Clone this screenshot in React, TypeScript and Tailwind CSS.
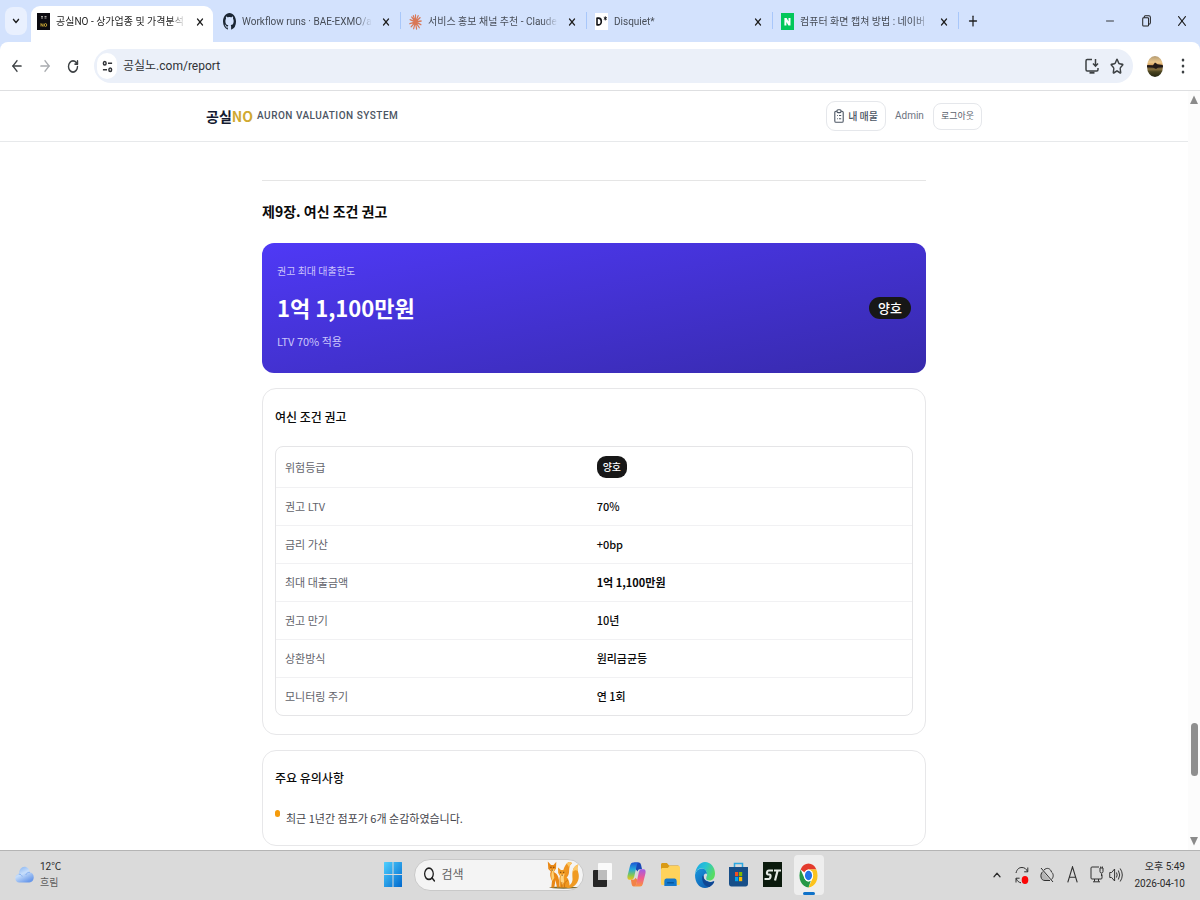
import type { ReactNode, SVGProps } from "react";
import {
  ArrowLeft,
  ArrowRight,
  ChevronDown,
  ChevronUp,
  Minus,
  Plus,
  RotateCw,
  Search,
  Star,
  X,
} from "lucide-react";

type Drawing = SVGProps<SVGSVGElement>;

const uiFont = "font-['Roboto','Noto_Sans_CJK_KR',sans-serif]";
const pageFont = "font-['Noto_Sans_CJK_KR',sans-serif]";

function Svg({ children, ...rest }: Drawing) {
  return (
    <svg preserveAspectRatio="none" fill="none" aria-hidden="true" {...rest}>
      {children}
    </svg>
  );
}

/* ---------- tab favicons ---------- */

function ReportFavicon() {
  return (
    <Svg viewBox="0 0 13 17" className="h-[17px] w-[13px]">
      <path fill="#0c0b10" d="M0 0h13v17H0z" />
      <path d="M4 3.5h2M7.5 3.5h2M4 5h2M7.5 5h2" stroke="#aaa9a2" strokeWidth="1" />
      <path d="M4 13.5v-3l2 3v-3" stroke="#b99a31" strokeWidth="1" />
      <ellipse cx="8.5" cy="12" rx="1.2" ry="1.5" stroke="#b99a31" strokeWidth="1" />
    </Svg>
  );
}

function GithubFavicon() {
  return (
    <Svg viewBox="0 0 16 16" className="h-[17px] w-[13px]">
      <path
        fill="#1b2634"
        d="M8 0C3.58 0 0 3.58 0 8c0 3.54 2.29 6.53 5.47 7.59.4.07.55-.17.55-.38 0-.19-.01-.82-.01-1.49-2.01.37-2.53-.49-2.69-.94-.09-.23-.48-.94-.82-1.13-.28-.15-.68-.52-.01-.53.63-.01 1.08.58 1.23.82.72 1.21 1.87.87 2.33.66.07-.52.28-.87.51-1.07-1.78-.2-3.64-.89-3.64-3.95 0-.87.31-1.59.82-2.15-.08-.2-.36-1.02.08-2.12 0 0 .67-.21 2.2.82.64-.18 1.32-.27 2-.27s1.36.09 2 .27c1.53-1.04 2.2-.82 2.2-.82.44 1.1.16 1.92.08 2.12.51.56.82 1.27.82 2.15 0 3.07-1.87 3.75-3.65 3.95.29.25.54.73.54 1.48 0 1.07-.01 1.93-.01 2.2 0 .21.15.46.55.38A8.01 8.01 0 0 0 16 8c0-4.42-3.58-8-8-8Z"
      />
    </Svg>
  );
}

function ClaudeFavicon() {
  return (
    <Svg viewBox="0 0 24 24" className="h-4 w-[13px]">
      <path
        stroke="#d97757"
        strokeWidth="2.1"
        strokeLinecap="round"
        d="M12 12V1.5M12 12l5-9.5M12 12l8.5-6.5M12 12l10.5-1.5M12 12l10 4M12 12l7 8.5M12 12l2 10.5M12 12l-3.5 10M12 12l-8 7M12 12L1.5 14.5M12 12L2 8.5M12 12L5 4.5M12 12L8 2.5"
      />
    </Svg>
  );
}

function DisquietFavicon() {
  return (
    <Svg viewBox="0 0 13 17" className="h-[17px] w-[13px]">
      <path fill="#fff" d="M0 0h13v17H0z" />
      <path stroke="#15161a" strokeWidth="1.6" d="M2 4.5v8M2 5.1h1.6c3.6 0 3.6 6.800 0 6.800H2" />
      <path stroke="#15161a" strokeWidth="1" d="M10.3 3.4v4M8.8 4.4l3 2M11.8 4.4l-3 2" />
    </Svg>
  );
}

function NaverFavicon() {
  return (
    <Svg viewBox="0 0 13 17" className="h-[17px] w-[13px]">
      <path fill="#03c75a" d="M0 0h13v17H0z" />
      <path fill="#fff" d="M3.4 5H5.600l1.900 3.500V5h2v7.500H7.400L5.4 9v3.5h-2z" />
    </Svg>
  );
}

/* ---------- toolbar drawings ---------- */

function TuneIcon() {
  return (
    <Svg viewBox="0 0 12 14" className="h-[13px] w-[11px]" stroke="#303236" strokeWidth="1.6">
      <ellipse cx="3" cy="3.5" rx="1.5" ry="1.9" />
      <path d="M6.5 3.5h4.5M1 10.5h4.5" />
      <ellipse cx="9" cy="10.5" rx="1.5" ry="1.9" />
    </Svg>
  );
}

function InstallIcon() {
  return (
    <Svg viewBox="0 0 14 16" className="h-4 w-[14px]" stroke="#3c4043" strokeWidth="1.5">
      <path d="M7 1.5H2.2Q1 1.5 1 3v8.500Q1 13 2.200 13h9.600q1.200 0 1.200-1.500V10" />
      <path d="M10.500 1v6.500M8 5.500l2.500 2.700L13 5.500" />
      <path d="M4.500 14.700h5" strokeWidth="2" />
    </Svg>
  );
}

function Avatar() {
  return (
    <Svg viewBox="0 0 16 21" className="h-[21px] w-4">
      <defs>
        <linearGradient id="sunset" x1="0" y1="0" x2="0" y2="1">
          <stop offset="0" stopColor="#b39a72" />
          <stop offset=".3" stopColor="#ecc98d" />
          <stop offset=".45" stopColor="#d09a58" />
          <stop offset=".5" stopColor="#2d241c" />
          <stop offset=".62" stopColor="#8c7440" />
          <stop offset=".75" stopColor="#4a4420" />
          <stop offset="1" stopColor="#23240f" />
        </linearGradient>
        <clipPath id="round-avatar">
          <ellipse cx="8" cy="10.5" rx="8" ry="10.5" />
        </clipPath>
      </defs>
      <g clipPath="url(#round-avatar)">
        <path fill="url(#sunset)" d="M0 0h16v21H0z" />
        <path fill="#221a18" d="M0 9l6 .3 2-2.800 2.500 1.800 5.500.7v2l-5 .5-2 1.500-3-1.500-6-.5z" />
      </g>
    </Svg>
  );
}

function ClipboardIcon() {
  return (
    <Svg viewBox="0 0 10 14" className="h-[14px] w-[10px]" stroke="#4b5563" strokeWidth="1.1">
      <path d="M3 2.200H2Q.8 2.200.8 3.600v8.300q0 1.400 1.200 1.400h6q1.200 0 1.200-1.400V3.600q0-1.400-1.200-1.400H7" />
      <rect x="3" y=".8" width="4" height="2.8" rx="1" />
      <path d="M3 6.500h.8M5 6.500h2.200M3 9.800h.8M5 9.800h2.200" />
    </Svg>
  );
}

/* ---------- taskbar drawings ---------- */

function CloudIcon() {
  return (
    <Svg viewBox="0 0 20 17" className="h-[17px] w-[19px]">
      <defs>
        <linearGradient id="cloud" x1="0" y1="0" x2=".6" y2="1">
          <stop offset="0" stopColor="#78a9ee" />
          <stop offset=".5" stopColor="#c7defb" />
          <stop offset="1" stopColor="#6b9aea" />
        </linearGradient>
      </defs>
      <path
        fill="url(#cloud)"
        d="M4.500 16.500C2 16.500.3 14.700.3 12.300c0-2.300 1.500-4 3.700-4.200C4.500 3.600 6.700.7 10 .7c3 0 5.200 2.300 5.600 5.600 2.400.2 4.100 2.200 4.100 5 0 3-1.900 5.200-4.500 5.200Z"
      />
      <path stroke="#79a8ee" strokeWidth=".8" d="M4 8.200c2 0 3 .8 3.600 2.400M15.600 6.400c-2.200 0-3.600.8-4.300 2.600" />
    </Svg>
  );
}

function WindowsIcon() {
  return (
    <Svg viewBox="0 0 18 25" className="h-[25px] w-[18px]">
      <defs>
        <linearGradient id="win" x1="0" y1="0" x2="1" y2="1">
          <stop offset="0" stopColor="#4fd0ff" />
          <stop offset="1" stopColor="#0068cd" />
        </linearGradient>
      </defs>
      <path fill="url(#win)" d="M0 .5Q0 0 .5 0h8v12H0zM9.500 0h8q.5 0 .5.500V12H9.500zM0 13h8.500v12h-8Q0 25 0 24.500zM9.500 13H18v11.500q0 .5-.5.500h-8z" />
    </Svg>
  );
}

function FoxesIcon() {
  return (
    <Svg viewBox="0 0 32 28" className="h-7 w-8 shrink-0">
      <path fill="#7a6a35" d="M2 26.300q14-1.500 29 0-1 1.400-14.500 1.400T2 26.300" />
      <path fill="#ee9320" d="M16 18C15 11 17 6 19.500 2.800 21.500.4 24 .6 25 2.500c-3 1.500-2.500 5-3 9-.4 3.500-2.500 6.500-6 6.500Z" />
      <path fill="#fbc765" d="M19.500 2.800C21.500.4 24 .6 25 2.500c-2 1-2.600 2.700-2.800 4.500-.7-2-1.500-3.200-2.700-4.200Z" />
      <path fill="#f09a22" d="M19 26.300c3-1.300 7-4 6.500-9C25 11.500 25.500 5 31.500 3.500c-2 3-.8 5.500 0 9C33 19 29 27 21 27Z" />
      <path fill="#fcc869" d="M25.700 11c.3-4 2-6.800 5.800-7.500-1.500 2.300-1.200 4.200-.7 6.500-1.800-1.200-3.500-.8-5.100 1Z" />
      <path fill="#e98816" d="M.8.600 4 4h2.500L9.300.8 9 7.500 6.800 11c4.500 2 5.700 7 5.700 15.500H10L8.500 19 7.300 26.500h-3L5 20C3.200 16 2.600 13 3.800 10.500L1.300 8Z" />
      <path fill="#ffd071" d="M2.500 7.500 5 9l2.800-1.500L6.500 11l.8 6-2.100 3c-1-4-1.200-7-.2-9.500Z" />
      <path fill="#ef9820" d="M11 6.500 14 9h2.500l3-2.500-.3 6L17.500 15c3.500 1.500 5.500 5 5 11.500H12.500c.8-3.500-1-7 .5-11.500l-1.800-3Z" />
      <path fill="#ffd482" d="M12.500 12.500 15 14l2.700-1.500-1 3.500.3 5-2 3c-1.500-3-1.800-6-1.200-8.500Z" />
      <path stroke="#c96d0c" strokeWidth=".8" d="M17.500 26.500c-.5-4 1-6.500 3.500-7.500M14.800 21v5.300" />
      <path stroke="#3d1f07" strokeWidth="1" d="M3.500 6.300h.9M6.400 6.300h.9M13.300 11.300h.9M16.300 11.300h.9M4.700 9.300h.8M14.700 14.300h.8" />
    </Svg>
  );
}

function TaskViewIcon() {
  return (
    <Svg viewBox="0 0 19 24" className="h-6 w-[19px]">
      <rect x="0" y="7" width="14" height="17" rx="1" fill="#262626" />
      <rect x="5" y="0" width="14" height="17" rx="1" fill="#fafafa" />
      <path fill="#bdbdbd" d="M5 7h9v10H5z" />
    </Svg>
  );
}

function CopilotIcon() {
  return (
    <Svg viewBox="0 0 24 24" className="h-[25px] w-[19px]">
      <defs>
        <linearGradient id="cpa" x1="0" y1="0" x2="0" y2="1">
          <stop offset="0" stopColor="#1c57d5" />
          <stop offset=".4" stopColor="#25a7dc" />
          <stop offset=".75" stopColor="#8ac94d" />
          <stop offset="1" stopColor="#f2c11b" />
        </linearGradient>
        <linearGradient id="cpb" x1="0" y1="0" x2="0" y2="1">
          <stop offset="0" stopColor="#a05be6" />
          <stop offset=".5" stopColor="#ef5a91" />
          <stop offset="1" stopColor="#f9953f" />
        </linearGradient>
      </defs>
      <path fill="#1948b7" d="M9 .5h6q2 0 2.700 2.200L19 7h-3q-2 0-2.700 2L11 7Z" />
      <path fill="url(#cpa)" d="M7.5.5H15q-2 0-2.700 2.500L9 14.500Q8.200 17 6 17H3Q0 17 .6 13.500L4 3Q4.800.5 7.500.5Z" />
      <path fill="#f28245" d="M5 17h3q2 0 2.700-2l2.300 2-1 4q-.8 2.500-3 2.500H8.500q-2 0-2.700-2.500Z" />
      <path fill="url(#cpb)" d="M16.500 23.500H9q2 0 2.700-2.500L15 9.500Q15.800 7 18 7h3q3 0 2.400 3.500L20 21q-.8 2.500-3.500 2.500Z" />
    </Svg>
  );
}

function FolderIcon() {
  return (
    <Svg viewBox="0 0 20 23" className="h-[23px] w-[19px]">
      <path fill="#d99a15" d="M0 1.500Q0 0 1.200 0h5L8.500 2.500H18q1.200 0 1.200 1.500v6H0z" />
      <path fill="#ffd35c" d="M0 6.500Q0 5 1.200 5H7l2-2h9.500Q20 3 20 4.500v16q0 1.500-1.200 1.500H1.200Q0 22 0 20.500z" />
      <path fill="#1478cc" d="M3.500 18q0-2.500 2-2.500h9q2 0 2 2.500v5h-13z" />
      <path fill="#07579f" d="M6.500 19h7v1.500h-7z" />
    </Svg>
  );
}

function EdgeIcon() {
  return (
    <Svg viewBox="0 0 24 24" className="h-[26px] w-5">
      <defs>
        <linearGradient id="edga" x1="0" y1="0" x2="1" y2=".5">
          <stop offset="0" stopColor="#1aa3e8" />
          <stop offset=".5" stopColor="#27c3d5" />
          <stop offset="1" stopColor="#58dc62" />
        </linearGradient>
        <linearGradient id="edgb" x1="0" y1="0" x2="1" y2="1">
          <stop offset="0" stopColor="#1998de" />
          <stop offset="1" stopColor="#0b4fa6" />
        </linearGradient>
      </defs>
      <path fill="url(#edgb)" d="M0 12C1 8 4.500 6 8.500 6c4 0 6 2.500 6 5 0 2-1 2.500-1 4 0 2 2.500 3.500 5.500 3.500 2 0 3.500-1 4-.5.5.5-3.500 6-11 6C5 24 0 19 0 12Z" />
      <path fill="#0f4592" d="M9 12.500c-1.500 5 2 10.500 8 10.500 3-1 6-4 6-5-1-.5-2 .8-5 .8-3.500 0-6.500-2-6.500-5.300Z" />
      <path fill="#dadada" d="M10.500 13.500c0-2 1.200-3 2.600-3 1 0 1.500.6 1.400 1.500-.1 1.200-1 1.600-1 2.700 0 1.400 1.300 2.300 3.500 2.800-3.500.5-6.500-1.500-6.500-4Z" />
      <path fill="url(#edga)" d="M.2 11C1 4.800 6 0 12 0c7 0 12 5 12 10.500 0 4-3 6.500-6.500 6.500-2.500 0-4-.8-4-1.800 0-.7 1-1.200 1-3.700 0-3-3-5.700-6.800-5.700-3.500 0-6 2-7.500 5.200Z" />
    </Svg>
  );
}

function StoreIcon() {
  return (
    <Svg viewBox="0 0 19 25" className="h-[25px] w-[19px]">
      <path stroke="#2ba8e2" strokeWidth="1.5" d="M5.500 6V1.500h8V6" />
      <path fill="#174e88" d="M0 5h19v16.500q0 3-2.500 3h-14q-2.500 0-2.500-3z" />
      <path fill="#f25022" d="M6 10h3.200v4.200H6z" />
      <path fill="#7fba00" d="M10 10h3.200v4.200H10z" />
      <path fill="#00a4ef" d="M6 15h3.200v4.200H6z" />
      <path fill="#ffb900" d="M10 15h3.200v4.200H10z" />
    </Svg>
  );
}

function TradingIcon() {
  return (
    <Svg viewBox="0 0 19 25" className="h-[25px] w-[19px]">
      <path fill="#0b1a0d" d="M0 0h19v25H0z" />
      <path stroke="#e4e9e4" strokeWidth="2.2" d="M10 8.500H5.800q-1.500 0-1.800 2t1.300 2h1q1.500 0 1.200 2.200T5.800 17H1.500M11 8.500H18M14.500 9L12 18.500" />
    </Svg>
  );
}

function ChromeIcon() {
  return (
    <Svg viewBox="0 0 48 48" className="h-[25px] w-[19px]">
      <circle cx="24" cy="24" r="23" fill="#fff" />
      <path fill="#e33b2e" d="M24 1a23 23 0 0 1 19.900 11.500H24A11.500 11.500 0 0 0 14 18.200L4.100 12.500A23 23 0 0 1 24 1Z" />
      <path fill="#fcc31e" d="M43.900 12.500A23 23 0 0 1 24 47l10-17.200a11.500 11.500 0 0 0 0-11.600l-1-1.700-9-4Z" />
      <path fill="#279847" d="M24 47A23 23 0 0 1 4.100 12.500L14 29.800A11.500 11.500 0 0 0 24 35.500l6-1.700Z" />
      <circle cx="24" cy="24" r="11.5" fill="#fff" />
      <circle cx="24" cy="24" r="9" fill="#2373e8" />
    </Svg>
  );
}

function SyncIcon() {
  return (
    <Svg viewBox="0 0 14 18" className="h-[18px] w-[14px]" stroke="#303030" strokeWidth="1">
      <path d="M1 7C2 3 4 1.500 7 1.500c2.500 0 4.500 1.500 5.500 4M12.800 1.500v4.300H9.200M1 16.500v-4.300h3.600M1.200 12.500C2 15 4 16.500 6 16.800" />
      <ellipse cx="10" cy="14" rx="3.3" ry="4" fill="#fb0505" stroke="none" />
    </Svg>
  );
}

function CloudOffIcon() {
  return (
    <Svg viewBox="0 0 14 16" className="h-4 w-[14px]" stroke="#303030" strokeWidth="1">
      <path fill="#b5b5b5" d="M3 4.500C1 6 .7 8 1 10c.4 2.500 2 3.500 4 3.500h5" />
      <path d="M4 3c3-3 6.500-1.500 7.500 2 2 1.500 2.500 5 0 7.500M1 1l12 14" />
    </Svg>
  );
}

function LetterModeIcon() {
  return (
    <Svg viewBox="0 0 10 16" className="h-[17px] w-[11px]" stroke="#303030" strokeWidth="1">
      <path d="M.7 15.500L5 .8l4.300 14.700M2.200 10.500h5.600" />
    </Svg>
  );
}

function NetworkIcon() {
  return (
    <Svg viewBox="0 0 14 17" className="h-[17px] w-[14px]" stroke="#303030" strokeWidth="1">
      <path d="M9 1H2Q1 1 1 2v10q0 1 1 1h9q1 0 1-1V8.500M4.500 13v2.500M8.500 13v2.500M3 15.800h7M11.500 7.500V10" />
      <path d="M10 2h3v3.500q0 1.500-1.500 1.500T10 5.500zM10.700 2V.5M12.400 2V.5" />
    </Svg>
  );
}

function SpeakerIcon() {
  return (
    <Svg viewBox="0 0 15 16" className="h-4 w-[14px]" stroke="#303030" strokeWidth="1">
      <path d="M.8 5.500h2L6 2v12l-3.200-3.500h-2zM8 5.500q1.500 2.500 0 5M10 3.500q3 4.500 0 9M12 1.500q4.500 6.500 0 13" />
    </Svg>
  );
}

/* ---------- browser frame ---------- */

const tabs: { title: string; icon: ReactNode }[] = [
  { title: "공실NO - 상가업종 및 가격분석", icon: <ReportFavicon /> },
  { title: "Workflow runs · BAE-EXMO/au", icon: <GithubFavicon /> },
  { title: "서비스 홍보 채널 추천 - Claude", icon: <ClaudeFavicon /> },
  { title: "Disquiet*", icon: <DisquietFavicon /> },
  { title: "컴퓨터 화면 캡쳐 방법 : 네이버", icon: <NaverFavicon /> },
];

function TabStrip() {
  return (
    <div className="flex h-[42px] shrink-0 items-stretch bg-[#d3e2fd]">
      <div className="flex w-[31px] shrink-0 items-center justify-center">
        <button aria-label="탭 검색" className="flex h-7 w-[22px] items-center justify-center rounded-lg bg-[#e9f0fe]">
          <ChevronDown preserveAspectRatio="none" className="h-3 w-[10px] text-[#1f1f1f]" strokeWidth={3.5} />
        </button>
      </div>
      <div role="tablist" className="flex min-w-0">
        {tabs.map((tab, i) => (
          <div
            key={tab.title}
            className={"flex shrink items-stretch pt-[6px] " + (i === 0 ? "w-[184px]" : "w-[186px]")}
          >
            <div
              role="tab"
              aria-selected={i === 0}
              className={
                "flex min-w-0 flex-1 items-center gap-[6px] pb-[5px] " +
                (i === 0 ? "mr-[2px] rounded-t-[9px] bg-white pr-[5px] pl-[6px]" : "pr-[6px] pl-2")
              }
            >
              <span className="shrink-0">{tab.icon}</span>
              <span
                className={
                  "min-w-0 flex-1 overflow-hidden [mask-image:linear-gradient(to_right,black_88%,transparent)] text-[10px] leading-4 whitespace-nowrap " +
                  (i === 0 ? "text-[#1f1f1f]" : "text-[#474d57]")
                }
              >
                {tab.title}
              </span>
              <button aria-label="탭 닫기" className="flex h-4 w-4 shrink-0 items-center justify-center">
                <X preserveAspectRatio="none" className="h-3 w-[10px] text-[#1f1f1f]" strokeWidth={3} />
              </button>
            </div>
            {i > 0 && <span className="mt-[6px] h-[17px] w-px bg-[#a8c7fa]" />}
          </div>
        ))}
      </div>
      <button aria-label="새 탭" className="flex w-[27px] shrink-0 items-center justify-center">
        <Plus preserveAspectRatio="none" className="h-4 w-3 text-[#1f1f1f]" strokeWidth={2.5} />
      </button>
      <div className="ml-auto flex shrink-0 items-center text-[#1f1f1f]">
        <button aria-label="최소화" className="flex h-10 w-9 items-center justify-center">
          <Minus preserveAspectRatio="none" className="h-4 w-3" strokeWidth={1.5} />
        </button>
        <button aria-label="이전 크기로" className="flex h-10 w-9 items-center justify-center">
          <Svg viewBox="0 0 10 13" className="h-3 w-[9px]" stroke="currentColor" strokeWidth="1.1">
            <rect x=".8" y="3" width="6.5" height="9" rx="1" />
            <path d="M2.500 2.800V2Q2.500.8 3.700.8h4Q9.300.8 9.300 2.500v6q0 1.500-1.800 1.500" />
          </Svg>
        </button>
        <button aria-label="닫기" className="flex h-10 w-9 items-center justify-center">
          <X preserveAspectRatio="none" className="h-[18px] w-[14px]" strokeWidth={1.5} />
        </button>
      </div>
    </div>
  );
}

function Toolbar() {
  return (
    <div className="bg-[#d3e2fd]">
      <div className="flex h-[49px] items-center rounded-t-lg border-b border-[#dedfe1] bg-white pl-[3px] text-[#3c4043]">
        <button aria-label="뒤로" className="flex h-8 w-7 items-center justify-center">
          <ArrowLeft preserveAspectRatio="none" className="h-[18px] w-[14px]" strokeWidth={2.3} />
        </button>
        <button aria-label="앞으로" className="flex h-8 w-7 items-center justify-center text-[#a8abaf]">
          <ArrowRight preserveAspectRatio="none" className="h-[18px] w-[14px]" strokeWidth={2.3} />
        </button>
        <button aria-label="새로고침" className="flex h-8 w-7 items-center justify-center">
          <RotateCw preserveAspectRatio="none" className="h-[15px] w-3" strokeWidth={2.8} />
        </button>
        <div className="ml-[7px] flex h-[34px] flex-1 items-center rounded-full bg-[#ebf0f9] pr-1 pl-[3px]">
          <button aria-label="사이트 정보" className="flex h-[26px] w-5 items-center justify-center rounded-full bg-white">
            <TuneIcon />
          </button>
          <input
            aria-label="주소창"
            defaultValue="공실노.com/report"
            className="ml-[6px] min-w-0 flex-1 bg-transparent text-[12px] leading-5 text-[#303236] outline-none"
          />
          <button aria-label="앱 설치" className="flex w-[25px] justify-center">
            <InstallIcon />
          </button>
          <button aria-label="북마크" className="flex w-[25px] justify-center">
            <Star preserveAspectRatio="none" className="h-[17px] w-[14px]" strokeWidth={2.4} />
          </button>
        </div>
        <button aria-label="프로필" className="ml-2 flex w-7 justify-center">
          <Avatar />
        </button>
        <button aria-label="메뉴" className="flex w-7 justify-center">
          <Svg viewBox="0 0 4 16" className="h-4 w-1" fill="#3c4043">
            <ellipse cx="2" cy="2" rx="1.3" ry="1.6" />
            <ellipse cx="2" cy="8" rx="1.3" ry="1.6" />
            <ellipse cx="2" cy="14" rx="1.3" ry="1.6" />
          </Svg>
        </button>
        <span className="w-[3px]" />
      </div>
    </div>
  );
}

/* ---------- report page ---------- */

function SiteHeader() {
  return (
    <header className="h-[51px] border-b border-[#e7e9eb] bg-white">
      <div className="mx-auto flex h-full max-w-[776px] items-center">
        <a href="#home" className="flex items-center gap-1">
          <span className="text-[14px] leading-5 font-bold text-[#141a30]">
            공실<span className="text-[#d0a931]">NO</span>
          </span>
          <span className={uiFont + " text-[10px] leading-4 font-medium tracking-wider text-[#4b5563]"}>
            AURON VALUATION SYSTEM
          </span>
        </a>
        <nav className="ml-auto flex items-center text-[#5b626d]">
          <a
            href="#listings"
            className="flex h-[30px] items-center gap-1 rounded-[9px] border border-[#e5e7eb] px-[7px] text-[10px] leading-4 font-medium text-[#4b5563]"
          >
            <ClipboardIcon />내 매물
          </a>
          <span className={uiFont + " mx-[9px] text-[10px] leading-4 text-[#6b7280]"}>Admin</span>
          <button className="h-[27px] rounded-[8px] border border-[#e5e7eb] px-[7px] text-[9px] leading-4">
            로그아웃
          </button>
        </nav>
      </div>
    </header>
  );
}

const terms: { label: string; value: string; kind?: "badge" | "strong" }[] = [
  { label: "위험등급", value: "양호", kind: "badge" },
  { label: "권고 LTV", value: "70%" },
  { label: "금리 가산", value: "+0bp" },
  { label: "최대 대출금액", value: "1억 1,100만원", kind: "strong" },
  { label: "권고 만기", value: "10년" },
  { label: "상환방식", value: "원리금균등" },
  { label: "모니터링 주기", value: "연 1회" },
];

function LoanCard() {
  return (
    <section className="mt-5 flex h-[130px] items-center justify-between rounded-xl bg-linear-to-br from-[#4f39f6] to-[#372aac] px-[15px] text-white">
      <div className="pb-1">
        <p className="text-[10px] leading-4 text-[#cbc5fb]">권고 최대 대출한도</p>
        <p className="mt-3 text-[22px] leading-8 font-bold">1억 1,100만원</p>
        <p className="mt-[10px] text-[11px] leading-4 text-[#cbc5fb]">LTV 70% 적용</p>
      </div>
      <span className="flex h-[22px] items-center rounded-full bg-[#171717] px-[9px] text-[13px] leading-4 font-medium">
        양호
      </span>
    </section>
  );
}

function TermsCard() {
  return (
    <section className="mt-[15px] rounded-[14px] border border-[#e7e7e9] px-3 py-[18px]">
      <h3 className="text-[12px] leading-5 font-medium text-[#0a0a0a]">여신 조건 권고</h3>
      <div className="mt-[19px] overflow-hidden rounded-lg border border-[#e5e5e7]">
        <table className="w-full table-fixed border-collapse text-[11px] leading-4">
          <tbody>
            {terms.map(({ label, value, kind }, i) => (
              <tr key={label} className={i === 0 ? "h-10" : "h-[38px] border-t border-[#f1f1f3]"}>
                <th scope="row" className="w-[49%] px-[9px] text-left font-normal text-[#62636b]">
                  {label}
                </th>
                <td className={"px-[9px] text-[#0a0a0a] " + (kind === "strong" ? "font-bold" : "font-medium")}>
                  {kind === "badge" ? (
                    <span className="inline-flex h-[22px] items-center rounded-[9px] bg-[#171717] px-[6px] text-[10px] text-white">
                      {value}
                    </span>
                  ) : (
                    value
                  )}
                </td>
              </tr>
            ))}
          </tbody>
        </table>
      </div>
    </section>
  );
}

function NotesCard() {
  return (
    <section className="mt-[15px] rounded-[14px] border border-[#e7e7e9] px-3 pt-[17px] pb-[17px]">
      <h3 className="text-[12px] leading-5 font-medium text-[#0a0a0a]">주요 유의사항</h3>
      <ul className="mt-5">
        <li className="flex items-start gap-[6px] text-[11px] leading-5 text-[#46464d]">
          <span className="mt-[2px] h-[7px] w-[5px] shrink-0 rounded-full bg-[#f59b0b]" />
          최근 1년간 점포가 6개 순감하였습니다.
        </li>
      </ul>
    </section>
  );
}

function ScrollTrack() {
  return (
    <div aria-hidden="true" className="flex w-3 shrink-0 flex-col items-center bg-[#fcfcfc] py-1">
      <Svg viewBox="0 0 8 8" className="h-[9px] w-2 shrink-0">
        <path fill="#8a8a8a" d="M4 .5L8 8H0z" />
      </Svg>
      <span className="flex-[621]" />
      <span className="h-[53px] w-[7px] rounded-full bg-[#8f8f8f]" />
      <span className="flex-[61]" />
      <Svg viewBox="0 0 8 8" className="h-[9px] w-2 shrink-0">
        <path fill="#8a8a8a" d="M4 7.500L8 0H0z" />
      </Svg>
    </div>
  );
}

/* ---------- taskbar ---------- */

const apps: { name: string; icon: ReactNode }[] = [
  { name: "작업 보기", icon: <TaskViewIcon /> },
  { name: "Copilot", icon: <CopilotIcon /> },
  { name: "파일 탐색기", icon: <FolderIcon /> },
  { name: "Edge", icon: <EdgeIcon /> },
  { name: "Store", icon: <StoreIcon /> },
  { name: "Trading", icon: <TradingIcon /> },
];

function Taskbar() {
  return (
    <footer className="grid h-[50px] shrink-0 grid-cols-[1fr_auto_1fr] items-center border-t border-[#b4b4b4] bg-[#dadada] pb-[2px] text-[#2b2b2b]">
      <button className="flex items-center gap-[6px] justify-self-start pl-[15px] text-left text-[10px] leading-4">
        <CloudIcon />
        <span>
          <span className="block">12℃</span>
          <span className="block text-[#5d5d5d]">흐림</span>
        </span>
      </button>
      <div className="flex items-center pl-[7px]">
        <button aria-label="시작" className="mr-3">
          <WindowsIcon />
        </button>
        <label className="flex h-8 w-[170px] items-center rounded-full border border-[#c9c9c9] bg-[#f4f4f4] pr-1 pl-2">
          <Search preserveAspectRatio="none" className="h-[17px] w-[13px] text-[#1f1f1f]" strokeWidth={2.4} />
          <input
            aria-label="검색"
            placeholder="검색"
            className="ml-[6px] min-w-0 flex-1 bg-transparent text-[12px] leading-5 outline-none placeholder:text-[#606060]"
          />
          <FoxesIcon />
        </label>
        <div className="ml-[2px] flex items-center">
          {apps.map((app) => (
            <button key={app.name} aria-label={app.name} className="flex h-10 w-[34px] items-center justify-center">
              {app.icon}
            </button>
          ))}
          <button
            aria-label="Chrome"
            className="ml-1 flex h-10 w-[30px] flex-col items-center justify-end rounded bg-[#eeeeee]"
          >
            <ChromeIcon />
            <span className="mt-1 h-[3px] w-3 rounded-full bg-[#0f72c9]" />
          </button>
        </div>
      </div>
      <div className="flex items-center justify-self-end pr-[15px]">
        <button aria-label="숨겨진 아이콘" className="flex w-[25px] justify-center">
          <ChevronUp preserveAspectRatio="none" className="h-[14px] w-3" strokeWidth={2.5} />
        </button>
        <span className="flex w-[25px] justify-center"><SyncIcon /></span>
        <span className="flex w-[25px] justify-center"><CloudOffIcon /></span>
        <span className="flex w-[25px] justify-center"><LetterModeIcon /></span>
        <button aria-label="네트워크 및 소리" className="flex items-center gap-[5px] pl-[5px]">
          <NetworkIcon />
          <SpeakerIcon />
        </button>
        <time className="ml-3 text-right text-[10px] leading-[17px]">
          <span className="block">오후 5:49</span>
          <span className="block">2026-04-10</span>
        </time>
      </div>
    </footer>
  );
}

export default function App() {
  return (
    <div className={uiFont + " flex h-screen flex-col bg-white"}>
      <TabStrip />
      <Toolbar />
      <div className="flex min-h-0 flex-1">
        <div className={pageFont + " min-w-0 flex-1 overflow-hidden"}>
          <SiteHeader />
          <main className="mx-auto mt-[38px] max-w-[664px] border-t border-[#e5e5e5]">
            <h2 className="mt-[18px] text-[14px] leading-6 font-bold text-[#0a0a0a]">제9장. 여신 조건 권고</h2>
            <LoanCard />
            <TermsCard />
            <NotesCard />
          </main>
        </div>
        <ScrollTrack />
      </div>
      <Taskbar />
    </div>
  );
}
